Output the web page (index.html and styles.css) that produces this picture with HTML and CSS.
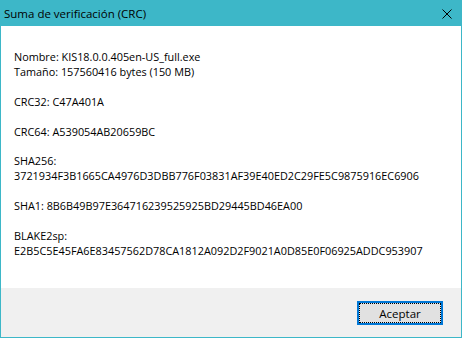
FILE: index.html
```html
<!DOCTYPE html>
<html lang="es">
<head>
    <meta charset="UTF-8">
    <title>Suma de verificación (CRC)</title>
    <link rel="stylesheet" href="styles.css">
</head>
<body>
    <div class="dialog">
        <div class="titlebar">
            <span class="title">Suma de verificación (CRC)</span>
            <span class="close">
                <svg width="10" height="10" viewBox="0 0 10 10">
                    <path d="M0.5 0.5 L9.5 9.5 M9.5 0.5 L0.5 9.5" stroke="#000" stroke-width="1"/>
                </svg>
            </span>
        </div>

        <div class="content">
            <p>Nombre: KIS18.0.0.405en-US_full.exe<br>Tamaño: 157560416 bytes (150 MB)</p>
            <p>CRC32: C47A401A</p>
            <p>CRC64: A539054AB20659BC</p>
            <p>SHA256:<br>3721934F3B1665CA4976D3DBB776F03831AF39E40ED2C29FE5C9875916EC6906</p>
            <p>SHA1: 8B6B49B97E364716239525925BD29445BD46EA00</p>
            <p>BLAKE2sp:<br>E2B5C5E45FA6E83457562D78CA1812A092D2F9021A0D85E0F06925ADDC953907</p>
        </div>

        <div class="footer">
            <button class="btn">Aceptar</button>
        </div>
    </div>
</body>
</html>
```

FILE: styles.css
```css
html, body {
    margin: 0;
    padding: 0;
    width: 462px;
    height: 338px;
    overflow: hidden;
}

body {
    font-family: 'Open Sans', 'Noto Sans', Arial, sans-serif;
    font-size: 10.85px;
    color: #000;
    background-color: #fff;
}

.dialog {
    box-sizing: border-box;
    width: 462px;
    height: 338px;
    border: 1px solid #3db7c8;
    border-top: none;
    display: flex;
    flex-direction: column;
}

.titlebar {
    height: 26px;
    margin: 0 -1px;
    background-color: #3db7c8;
    display: flex;
    align-items: center;
    justify-content: space-between;
    padding: 0 10px 0 4px;
    flex-shrink: 0;
}

.title {
    font-size: 11.5px;
    padding-top: 1px;
}

.close {
    display: flex;
    margin-top: 1px;
}

.content {
    flex: 1;
    padding: 24px 12px 0 13px;
    line-height: 14.9px;
}

.content p {
    margin: 0 0 14.9px 0;
    text-align: left;
}

.footer {
    height: 49px;
    background-color: #f0f0f0;
    display: flex;
    justify-content: flex-end;
    align-items: flex-start;
    padding: 13px 18px 0 0;
    box-sizing: border-box;
    flex-shrink: 0;
}

.btn {
    width: 86px;
    height: 24px;
    box-sizing: border-box;
    border: 2px solid #0078d7;
    background-color: #e1e1e1;
    outline: 1px dotted #000;
    outline-offset: -3px;
    font-family: 'Open Sans', 'Noto Sans', Arial, sans-serif;
    font-size: 11.5px;
    color: #000;
    padding: 0;
}
```
